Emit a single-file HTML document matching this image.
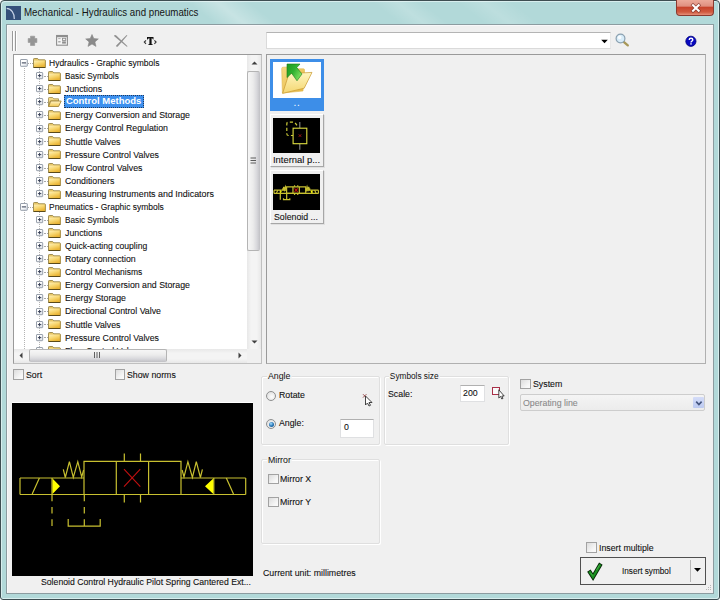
<!DOCTYPE html>
<html><head><meta charset="utf-8">
<style>
*{margin:0;padding:0;box-sizing:border-box}
html,body{width:720px;height:600px;overflow:hidden;background:#fff}
body{font-family:"Liberation Sans",sans-serif;font-size:8.8px;color:#101010;position:relative}
.a{position:absolute}
.t{position:absolute;white-space:nowrap;line-height:13px;height:13px}
.s{font-size:9.6px;transform:scaleX(.915);transform-origin:0 50%;-webkit-text-stroke:0.1px currentColor}
#win{left:0;top:0;width:720px;height:600px;background:#b2d9d9;border:1px solid #3e4e52;border-radius:4px 4px 3px 3px;box-shadow:inset 1px 1px 0 #d8eeee,inset -1px -1px 0 #d8eeee}
#content{left:6px;top:24px;width:708px;height:570px;background:#f0f0f0;border:1px solid #8c9ca0;box-shadow:inset 1px 1px 0 #f8f8fa}
.cb{position:absolute;width:10.5px;height:10.5px;border:1px solid #a2a2a2;background:linear-gradient(135deg,#dcdcdc,#f6f6f6 70%,#fbfbfb)}
.grp{position:absolute;border:1px solid #dfdfdf;border-radius:2px;box-shadow:inset 1px 1px 0 #fff,1px 1px 0 #fff}
.gt{position:absolute;background:#f0f0f0;padding:0 1px;white-space:nowrap;line-height:11px;height:11px;font-size:9.6px;transform:scaleX(.915);transform-origin:0 50%}
.eb{position:absolute;width:9px;height:9px;border:1px solid #a8b0bc;border-radius:1px;background:linear-gradient(135deg,#ffffff 40%,#dde2ea)}
.eb .h{position:absolute;left:1px;top:3px;width:5px;height:1px;background:#2a3450}
.eb .v{position:absolute;left:3px;top:1px;width:1px;height:5px;background:#2a3450}
.hd{position:absolute;height:1px;border-top:1px dotted #a8a8a8}
.vd{position:absolute;width:1px;border-left:1px dotted #b4b4b4}
.sel{background:#3d90ee;color:#fff;font-weight:bold;font-size:9.5px;padding:0 1.3px;height:13px;line-height:10px;border:1px dotted #203a60}
.rad{position:absolute;width:10px;height:10px;border-radius:50%;border:1px solid #8e8f8f;background:radial-gradient(circle at 60% 60%,#fdfdfd,#d9d9d9)}
.tb{position:absolute;background:#fff;border:1px solid #dfe0e2;border-top-color:#b0b0b0}
.card{position:absolute;width:54px;height:53px;border:1px solid #fff;border-right-color:#a6a6a6;border-bottom-color:#a6a6a6;box-shadow:1px 1px 0 #e0e0e0}
</style></head><body>
<svg width="0" height="0" style="position:absolute">
<defs>
<linearGradient id="fg" x1="0" y1="0" x2="0.5" y2="1"><stop offset="0" stop-color="#fdf0b8"/><stop offset="0.5" stop-color="#f8d873"/><stop offset="1" stop-color="#eab536"/></linearGradient>
<linearGradient id="fg2" x1="0" y1="0" x2="0" y2="1"><stop offset="0" stop-color="#fff4c8"/><stop offset="1" stop-color="#f2c850"/></linearGradient>
<g id="plus"><rect x="0.5" y="0.5" width="6.2" height="6.2" rx="0.5" fill="url(#ebg)" stroke="#98a0ac" stroke-width="1"/><path d="M1.9 3.6 H5.3 M3.6 1.9 V5.3" stroke="#3a4258" stroke-width="1"/></g>
<g id="minus"><rect x="0.5" y="0.5" width="6.8" height="6.8" rx="0.5" fill="url(#ebg)" stroke="#98a0ac" stroke-width="1"/><path d="M1.8 3.9 H6" stroke="#30384e" stroke-width="1"/></g>
<linearGradient id="ebg" x1="0" y1="0" x2="1" y2="1"><stop offset="0.4" stop-color="#ffffff"/><stop offset="1" stop-color="#d8dde6"/></linearGradient>
<g id="fclosed">
<path d="M0.5 9.5 V1.3 Q0.5 0.5 1.3 0.5 H4.6 L5.8 1.8 H11.7 Q12.3 1.8 12.3 2.5 V9.5 Z" fill="#e8c768" stroke="#8c7a3c" stroke-width="0.8"/>
<rect x="1" y="2.6" width="11" height="6.6" fill="url(#fg)"/>
<path d="M0.6 9.5 H12.3" stroke="#5a4a1a" stroke-width="1" fill="none"/><path d="M12.3 9.2 V2.6" stroke="#b09040" stroke-width="0.8" fill="none"/>
</g>
<g id="fopen">
<path d="M0.5 9.5 V1.3 Q0.5 0.5 1.3 0.5 H4.6 L5.8 1.8 H10.5 V4 H2.2 Z" fill="#f3d985" stroke="#9c8a4c" stroke-width="0.8"/>
<path d="M0.6 9.5 L2.8 4 H13.2 L10.6 9.5 Z" fill="url(#fg2)" stroke="#9c7c2c" stroke-width="0.8"/>
</g>
<g id="sym">
<g stroke="#c8c030" stroke-width="1.2" fill="none" vector-effect="non-scaling-stroke">
<path vector-effect="non-scaling-stroke" d="M20 478 H84 M20 494.5 H245.7 M20 478 V494.5 M245.7 478 V494.5 M181 478 H245.7"/>
<rect vector-effect="non-scaling-stroke" x="84" y="461.3" width="97" height="33.2"/>
<line vector-effect="non-scaling-stroke" x1="116.3" y1="461.3" x2="116.3" y2="494.5"/><line vector-effect="non-scaling-stroke" x1="148.6" y1="461.3" x2="148.6" y2="494.5"/>
<path vector-effect="non-scaling-stroke" d="M124.3 453.5 V461.3 M140.5 453.5 V461.3 M124.3 494.5 V502.6 M140.5 494.5 V502.6"/>
<path vector-effect="non-scaling-stroke" d="M32.2 494 L39.4 478 M226.3 478 L233.5 494"/>
<path vector-effect="non-scaling-stroke" d="M52 478 V494.5 M213.8 478 V494.5"/>
<path vector-effect="non-scaling-stroke" d="M63.3 469.4 L65.3 477.5 L69.4 461.7 L73.3 477.5 L77.8 461.7 L81.7 477 L83.6 470"/>
<path vector-effect="non-scaling-stroke" d="M202.4 469.4 L200.4 477.5 L196.3 461.7 L192.4 477.5 L187.9 461.7 L184 477 L182.1 470"/>
<path vector-effect="non-scaling-stroke" d="M52 494.5 V527" stroke-dasharray="6.7 5.7"/>
<path vector-effect="non-scaling-stroke" d="M84.3 494.5 V527" stroke-dasharray="6.7 5.7"/>
<path vector-effect="non-scaling-stroke" d="M68.2 519 V526.2 H100.2 V519"/>
</g>
<path vector-effect="non-scaling-stroke" d="M124 469.2 L140.3 486.7 M140.3 469.2 L124 486.7" stroke="#c01010" stroke-width="1.1"/>
<path d="M52.5 478.5 L60 486.2 L52.5 494 Z M213.3 478.5 L205 486.2 L213.3 494 Z" fill="#ffff00"/>
</g>
</defs>
</svg>
<div id="win" class="a"></div>
<div class="a" style="left:1px;top:1px;width:718px;height:23px;background:linear-gradient(38deg,rgba(255,255,255,0) 132px,rgba(255,255,255,.28) 150px,rgba(255,255,255,0) 170px,rgba(255,255,255,0) 246px,rgba(255,255,255,.16) 261px,rgba(255,255,255,0) 276px,rgba(255,255,255,0) 298px,rgba(255,255,255,.14) 314px,rgba(255,255,255,0) 332px);border-radius:3px 3px 0 0"></div>
<!-- title -->
<svg class="a" style="left:6px;top:6px" width="15" height="14" viewBox="0 0 15 14"><rect x="0" y="0" width="15" height="14" fill="#34507a"/><path d="M0.7 2.3 A8 10 0 0 1 8.3 13" stroke="#c8d4e8" stroke-width="1.2" fill="none"/></svg>
<div class="t" style="left:24px;top:6px;font-size:10.4px;transform:scaleX(.935);transform-origin:0 50%;color:#141414">Mechanical - Hydraulics and pneumatics</div>
<div class="a" style="left:676px;top:0;width:38px;height:16px;border:1px solid #8a3a30;border-top:none;border-radius:0 0 4px 4px;background:linear-gradient(#ecaa9a 0%,#e09080 40%,#c8442c 50%,#d05a40 80%,#e6907a 100%)"></div>
<svg class="a" style="left:690px;top:2px" width="12" height="12" viewBox="0 0 12 12"><path d="M3 3.2 L8.7 8.8 M8.7 3.2 L3 8.8" stroke="#7a3028" stroke-width="3.4" stroke-linecap="square" opacity="0.75"/><path d="M3 3.2 L8.7 8.8 M8.7 3.2 L3 8.8" stroke="#fff" stroke-width="2" stroke-linecap="square"/></svg>

<div id="content" class="a"></div>

<!-- toolbar -->
<div class="a" style="left:12px;top:31px;width:1px;height:20px;background:#9a9a9a;box-shadow:1px 0 0 #fff"></div>
<div class="a" style="left:15px;top:31px;width:1px;height:20px;background:#9a9a9a;box-shadow:1px 0 0 #fff"></div>
<svg class="a" style="left:27px;top:35px" width="12" height="11" viewBox="0 0 12 11"><path d="M3.5 1.2 H7.7 V3.5 H9.9 V7.5 H7.7 V10.5 H3.5 V7.5 H1.2 V3.5 H3.5 Z" fill="#959595" stroke="#959595" stroke-width="0.6" stroke-linejoin="round"/></svg>
<svg class="a" style="left:55px;top:34px" width="14" height="13" viewBox="0 0 14 13"><rect x="1.6" y="1.5" width="10.8" height="9.7" fill="#f6f6f6" stroke="#8e8e8e" stroke-width="1.1"/><rect x="1.6" y="1.5" width="10.8" height="1.7" fill="#8e8e8e"/><rect x="3.2" y="4.2" width="2.4" height="0.9" fill="#a4a4a4"/><rect x="3.2" y="7" width="2.4" height="1.5" fill="#ababab"/><rect x="7.5" y="4.3" width="3.2" height="2.1" fill="none" stroke="#8e8e8e" stroke-width="0.9"/><rect x="7.1" y="7.4" width="3.8" height="2.2" fill="#8e8e8e"/></svg>
<svg class="a" style="left:85px;top:34px" width="14" height="13" viewBox="0 0 14 13"><path d="M7 0.5 L8.8 4.6 L13.3 4.9 L9.9 7.9 L11 12.4 L7 10 L3 12.4 L4.1 7.9 L0.7 4.9 L5.2 4.6 Z" fill="#8a8a8a" stroke="#8a8a8a" stroke-width="0.6" stroke-linejoin="round"/></svg>
<svg class="a" style="left:113px;top:34px" width="16" height="14" viewBox="-1 -1 16 14"><path d="M0 1 Q0.3 -0.5 2 0.3 L13.6 11.2 L12.8 11.8 Z" fill="#909090"/><path d="M12.6 -0.1 L13.4 0.5 L3.8 11.6 Q2.2 12.4 2 10.8 Z" fill="#909090"/></svg>
<svg class="a" style="left:143px;top:36px" width="15" height="10" viewBox="0 0 15 10"><path d="M3 4.3 L1.3 6 L3 7.8 M11.4 4.3 L13.1 6 L11.4 7.8" stroke="#333" stroke-width="1.1" fill="none"/><path d="M4 1.1 H10.5 V3.4 L10 3.4 Q9.6 2.2 8.6 2.2 V8.1 Q8.8 8.4 9.8 8.4 V8.9 H5.2 V8.4 Q6.2 8.4 6.4 8.1 V2.2 Q5.4 2.2 4.6 3.4 L4 3.4 Z" fill="#111"/></svg>

<!-- search combo -->
<div class="tb" style="left:266px;top:32px;width:345px;height:17px;border-color:#dadada;border-top-color:#b4b4b4;border-right-color:#e8e8e8"></div>
<svg class="a" style="left:601px;top:39px" width="8" height="5" viewBox="0 0 8 5"><path d="M0.2 0.7 H6.8 L3.5 4.3 Z" fill="#000"/></svg>
<svg class="a" style="left:615px;top:33px" width="15" height="15" viewBox="0 0 15 15"><line x1="8.4" y1="8.6" x2="12.8" y2="12.4" stroke="#a89858" stroke-width="2.3" stroke-linecap="round"/><circle cx="5.5" cy="5.5" r="4.4" fill="#d8ecf8" stroke="#8aa0b0" stroke-width="1.2"/><circle cx="4.6" cy="4.4" r="1.8" fill="#fff" opacity="0.8"/></svg>
<svg class="a" style="left:684px;top:34px" width="14" height="14" viewBox="684 34 14 14"><circle cx="690.9" cy="41.3" r="5.1" fill="#0808c0" stroke="#000078" stroke-width="0.8"/><path d="M689.2 39.9 Q689.2 38.3 691 38.3 Q692.8 38.3 692.8 39.8 Q692.8 40.7 691.6 41.3 Q691 41.6 691 42.5" stroke="#fff" stroke-width="1.4" fill="none"/><rect x="690.3" y="43.2" width="1.4" height="1.4" fill="#fff"/></svg>

<!-- tree panel -->
<div class="a" style="left:13px;top:54px;width:249px;height:310px;background:#fff;border:1px solid #9a9a9a;border-right-color:#c0c0c0;border-bottom-color:#c0c0c0"></div>
<div class="a" style="left:14px;top:55px;width:233px;height:294px;overflow:hidden">
<div class="a" style="left:-14px;top:-55px;width:260px;height:400px">
<div class="vd" style="left:24px;top:67.5px;height:281.5px"></div>
<div class="vd" style="left:39px;top:68.0px;height:125.7px"></div>
<div class="vd" style="left:39px;top:211.8px;height:137.2px"></div>
<svg class="a" style="left:20px;top:59px" width="8" height="8" viewBox="0 0 8 8"><use href="#minus"/></svg>
<div class="hd" style="left:28.2px;top:63.00px;width:4.5px"></div>
<svg class="a" style="left:32.6px;top:58.00px" width="14" height="10" viewBox="0 0 14 10"><use href="#fclosed"/></svg>
<div class="t s" style="left:49.4px;top:56.10px;transform:scaleX(0.8854)">Hydraulics - Graphic symbols</div>
<svg class="a" style="left:36px;top:72px" width="8" height="8" viewBox="0 0 8 8"><use href="#plus"/></svg>
<div class="hd" style="left:44.0px;top:76.07px;width:4.1px"></div>
<svg class="a" style="left:48.0px;top:71.07px" width="14" height="10" viewBox="0 0 14 10"><use href="#fclosed"/></svg>
<div class="t s" style="left:64.8px;top:69.17px;transform:scaleX(0.8546)">Basic Symbols</div>
<svg class="a" style="left:36px;top:85px" width="8" height="8" viewBox="0 0 8 8"><use href="#plus"/></svg>
<div class="hd" style="left:44.0px;top:89.14px;width:4.1px"></div>
<svg class="a" style="left:48.0px;top:84.14px" width="14" height="10" viewBox="0 0 14 10"><use href="#fclosed"/></svg>
<div class="t s" style="left:64.8px;top:82.24px">Junctions</div>
<svg class="a" style="left:36px;top:98px" width="8" height="8" viewBox="0 0 8 8"><use href="#plus"/></svg>
<div class="hd" style="left:44.0px;top:102.21px;width:4.1px"></div>
<svg class="a" style="left:48.0px;top:97.21px" width="14" height="10" viewBox="0 0 14 10"><use href="#fopen"/></svg>
<div class="t sel" style="left:63.6px;top:95.11px">Control Methods</div>
<svg class="a" style="left:36px;top:111px" width="8" height="8" viewBox="0 0 8 8"><use href="#plus"/></svg>
<div class="hd" style="left:44.0px;top:115.28px;width:4.1px"></div>
<svg class="a" style="left:48.0px;top:110.28px" width="14" height="10" viewBox="0 0 14 10"><use href="#fclosed"/></svg>
<div class="t s" style="left:64.8px;top:108.38px">Energy Conversion and Storage</div>
<svg class="a" style="left:36px;top:125px" width="8" height="8" viewBox="0 0 8 8"><use href="#plus"/></svg>
<div class="hd" style="left:44.0px;top:128.35px;width:4.1px"></div>
<svg class="a" style="left:48.0px;top:123.35px" width="14" height="10" viewBox="0 0 14 10"><use href="#fclosed"/></svg>
<div class="t s" style="left:64.8px;top:121.45px">Energy Control Regulation</div>
<svg class="a" style="left:36px;top:138px" width="8" height="8" viewBox="0 0 8 8"><use href="#plus"/></svg>
<div class="hd" style="left:44.0px;top:141.42px;width:4.1px"></div>
<svg class="a" style="left:48.0px;top:136.42px" width="14" height="10" viewBox="0 0 14 10"><use href="#fclosed"/></svg>
<div class="t s" style="left:64.8px;top:134.52px">Shuttle Valves</div>
<svg class="a" style="left:36px;top:151px" width="8" height="8" viewBox="0 0 8 8"><use href="#plus"/></svg>
<div class="hd" style="left:44.0px;top:154.49px;width:4.1px"></div>
<svg class="a" style="left:48.0px;top:149.49px" width="14" height="10" viewBox="0 0 14 10"><use href="#fclosed"/></svg>
<div class="t s" style="left:64.8px;top:147.59px">Pressure Control Valves</div>
<svg class="a" style="left:36px;top:164px" width="8" height="8" viewBox="0 0 8 8"><use href="#plus"/></svg>
<div class="hd" style="left:44.0px;top:167.56px;width:4.1px"></div>
<svg class="a" style="left:48.0px;top:162.56px" width="14" height="10" viewBox="0 0 14 10"><use href="#fclosed"/></svg>
<div class="t s" style="left:64.8px;top:160.66px">Flow Control Valves</div>
<svg class="a" style="left:36px;top:177px" width="8" height="8" viewBox="0 0 8 8"><use href="#plus"/></svg>
<div class="hd" style="left:44.0px;top:180.63px;width:4.1px"></div>
<svg class="a" style="left:48.0px;top:175.63px" width="14" height="10" viewBox="0 0 14 10"><use href="#fclosed"/></svg>
<div class="t s" style="left:64.8px;top:173.73px">Conditioners</div>
<svg class="a" style="left:36px;top:190px" width="8" height="8" viewBox="0 0 8 8"><use href="#plus"/></svg>
<div class="hd" style="left:44.0px;top:193.70px;width:4.1px"></div>
<svg class="a" style="left:48.0px;top:188.70px" width="14" height="10" viewBox="0 0 14 10"><use href="#fclosed"/></svg>
<div class="t s" style="left:64.8px;top:186.80px;transform:scaleX(0.9281)">Measuring Instruments and Indicators</div>
<svg class="a" style="left:20px;top:203px" width="8" height="8" viewBox="0 0 8 8"><use href="#minus"/></svg>
<div class="hd" style="left:28.2px;top:206.77px;width:4.5px"></div>
<svg class="a" style="left:32.6px;top:201.77px" width="14" height="10" viewBox="0 0 14 10"><use href="#fclosed"/></svg>
<div class="t s" style="left:49.4px;top:199.87px;transform:scaleX(0.8827)">Pneumatics - Graphic symbols</div>
<svg class="a" style="left:36px;top:216px" width="8" height="8" viewBox="0 0 8 8"><use href="#plus"/></svg>
<div class="hd" style="left:44.0px;top:219.84px;width:4.1px"></div>
<svg class="a" style="left:48.0px;top:214.84px" width="14" height="10" viewBox="0 0 14 10"><use href="#fclosed"/></svg>
<div class="t s" style="left:64.8px;top:212.94px;transform:scaleX(0.8546)">Basic Symbols</div>
<svg class="a" style="left:36px;top:229px" width="8" height="8" viewBox="0 0 8 8"><use href="#plus"/></svg>
<div class="hd" style="left:44.0px;top:232.91px;width:4.1px"></div>
<svg class="a" style="left:48.0px;top:227.91px" width="14" height="10" viewBox="0 0 14 10"><use href="#fclosed"/></svg>
<div class="t s" style="left:64.8px;top:226.01px">Junctions</div>
<svg class="a" style="left:36px;top:242px" width="8" height="8" viewBox="0 0 8 8"><use href="#plus"/></svg>
<div class="hd" style="left:44.0px;top:245.98px;width:4.1px"></div>
<svg class="a" style="left:48.0px;top:240.98px" width="14" height="10" viewBox="0 0 14 10"><use href="#fclosed"/></svg>
<div class="t s" style="left:64.8px;top:239.08px;transform:scaleX(0.8965)">Quick-acting coupling</div>
<svg class="a" style="left:36px;top:255px" width="8" height="8" viewBox="0 0 8 8"><use href="#plus"/></svg>
<div class="hd" style="left:44.0px;top:259.05px;width:4.1px"></div>
<svg class="a" style="left:48.0px;top:254.05px" width="14" height="10" viewBox="0 0 14 10"><use href="#fclosed"/></svg>
<div class="t s" style="left:64.8px;top:252.15px">Rotary connection</div>
<svg class="a" style="left:36px;top:268px" width="8" height="8" viewBox="0 0 8 8"><use href="#plus"/></svg>
<div class="hd" style="left:44.0px;top:272.12px;width:4.1px"></div>
<svg class="a" style="left:48.0px;top:267.12px" width="14" height="10" viewBox="0 0 14 10"><use href="#fclosed"/></svg>
<div class="t s" style="left:64.8px;top:265.22px;transform:scaleX(0.8830)">Control Mechanisms</div>
<svg class="a" style="left:36px;top:281px" width="8" height="8" viewBox="0 0 8 8"><use href="#plus"/></svg>
<div class="hd" style="left:44.0px;top:285.19px;width:4.1px"></div>
<svg class="a" style="left:48.0px;top:280.19px" width="14" height="10" viewBox="0 0 14 10"><use href="#fclosed"/></svg>
<div class="t s" style="left:64.8px;top:278.29px">Energy Conversion and Storage</div>
<svg class="a" style="left:36px;top:294px" width="8" height="8" viewBox="0 0 8 8"><use href="#plus"/></svg>
<div class="hd" style="left:44.0px;top:298.26px;width:4.1px"></div>
<svg class="a" style="left:48.0px;top:293.26px" width="14" height="10" viewBox="0 0 14 10"><use href="#fclosed"/></svg>
<div class="t s" style="left:64.8px;top:291.36px">Energy Storage</div>
<svg class="a" style="left:36px;top:308px" width="8" height="8" viewBox="0 0 8 8"><use href="#plus"/></svg>
<div class="hd" style="left:44.0px;top:311.33px;width:4.1px"></div>
<svg class="a" style="left:48.0px;top:306.33px" width="14" height="10" viewBox="0 0 14 10"><use href="#fclosed"/></svg>
<div class="t s" style="left:64.8px;top:304.43px">Directional Control Valve</div>
<svg class="a" style="left:36px;top:321px" width="8" height="8" viewBox="0 0 8 8"><use href="#plus"/></svg>
<div class="hd" style="left:44.0px;top:324.40px;width:4.1px"></div>
<svg class="a" style="left:48.0px;top:319.40px" width="14" height="10" viewBox="0 0 14 10"><use href="#fclosed"/></svg>
<div class="t s" style="left:64.8px;top:317.50px">Shuttle Valves</div>
<svg class="a" style="left:36px;top:334px" width="8" height="8" viewBox="0 0 8 8"><use href="#plus"/></svg>
<div class="hd" style="left:44.0px;top:337.47px;width:4.1px"></div>
<svg class="a" style="left:48.0px;top:332.47px" width="14" height="10" viewBox="0 0 14 10"><use href="#fclosed"/></svg>
<div class="t s" style="left:64.8px;top:330.57px">Pressure Control Valves</div>
<svg class="a" style="left:36px;top:347px" width="8" height="8" viewBox="0 0 8 8"><use href="#plus"/></svg>
<div class="hd" style="left:44.0px;top:350.54px;width:4.1px"></div>
<svg class="a" style="left:48.0px;top:345.54px" width="14" height="10" viewBox="0 0 14 10"><use href="#fclosed"/></svg>
<div class="t s" style="left:64.8px;top:343.64px">Flow Control Valves</div>
</div>
</div>
<!-- vertical scrollbar -->
<div class="a" style="left:247px;top:55px;width:14px;height:294px;background:linear-gradient(90deg,#e8e8e8,#f4f4f4 30%,#f4f4f4 70%,#e8e8e8)"></div>
<svg class="a" style="left:251px;top:61px" width="7" height="4" viewBox="0 0 7 4"><path d="M0.5 3.5 L3.5 0.5 L6.5 3.5 Z" fill="#404040"/></svg>
<div class="a" style="left:247px;top:71px;width:13px;height:180px;border:1px solid #b4b4b4;border-right-color:#c4c4c8;border-radius:2px;background:linear-gradient(90deg,#f6f6f6,#ececec 45%,#d8d8dc 80%,#c8c8cc)"></div>
<svg class="a" style="left:250px;top:157px" width="7" height="7" viewBox="0 0 7 7"><path d="M0.5 1 H6 M0.5 3.5 H6 M0.5 6 H6" stroke="#5a5a5a" stroke-width="1"/></svg>
<svg class="a" style="left:251px;top:340px" width="7" height="4" viewBox="0 0 7 4"><path d="M0.5 0.5 L3.5 3.5 L6.5 0.5 Z" fill="#404040"/></svg>
<!-- horizontal scrollbar -->
<div class="a" style="left:14px;top:349px;width:247px;height:14px;background:linear-gradient(#e8e8e8,#f4f4f4 30%,#f4f4f4 70%,#e8e8e8)"></div>
<svg class="a" style="left:19px;top:352px" width="4" height="7" viewBox="0 0 4 7"><path d="M3.5 0.5 L0.5 3.5 L3.5 6.5 Z" fill="#404040"/></svg>
<div class="a" style="left:29px;top:349px;width:138px;height:13px;border:1px solid #b4b4b4;border-bottom-color:#c4c4c8;border-radius:2px;background:linear-gradient(#f6f6f6,#ececec 45%,#d8d8dc 80%,#c8c8cc)"></div>
<svg class="a" style="left:94px;top:352px" width="7" height="6" viewBox="0 0 7 6"><path d="M0.5 0 V6 M3 0 V6 M5.5 0 V6" stroke="#606060" stroke-width="1"/></svg>
<svg class="a" style="left:238px;top:352px" width="4" height="7" viewBox="0 0 4 7"><path d="M0.5 0.5 L3.5 3.5 L0.5 6.5 Z" fill="#404040"/></svg>
<div class="a" style="left:247px;top:349px;width:14px;height:14px;background:#f0f0f0"></div>

<!-- right panel -->
<div class="a" style="left:266px;top:54px;width:440px;height:310px;background:#f0f0f0;border:1px solid #9a9a9a;border-right-color:#b0b0b0;border-bottom-color:#b0b0b0"></div>
<!-- thumb 1 selected -->
<div class="a" style="left:270px;top:59px;width:54px;height:52px;background:#3d8ee8"></div>
<div class="a" style="left:273px;top:62px;width:48px;height:36px;background:#fff"></div>
<div class="t" style="left:270px;top:96.3px;width:54px;text-align:center;color:#fff;font-size:10px;letter-spacing:0.6px">..</div>
<svg class="a" style="left:280px;top:63px" width="33" height="31" viewBox="0 0 33 31">
<defs><linearGradient id="fb" x1="0" y1="0" x2="1" y2="1"><stop offset="0" stop-color="#f6d880"/><stop offset="1" stop-color="#e6b840"/></linearGradient>
<linearGradient id="ff" x1="0" y1="0" x2="0" y2="1"><stop offset="0" stop-color="#fff6c0"/><stop offset="1" stop-color="#f4d670"/></linearGradient>
<linearGradient id="ga" x1="0" y1="0" x2="1" y2="0.6"><stop offset="0" stop-color="#1e9a1e"/><stop offset="0.5" stop-color="#30b030"/><stop offset="1" stop-color="#80e060"/></linearGradient></defs>
<path d="M2.4 30 L1.7 5.5 Q1.7 4.2 3.2 4.2 L9 4 L11 5.8 L23.5 5.8 Q24.5 5.8 24.5 7 L24.5 10 L23 28 Z" fill="url(#fb)" stroke="#e0b850" stroke-width="0.6"/>
<path d="M2.6 30.4 L9 10.6 L32 9.4 L24.2 25.2 Z" fill="url(#ff)" stroke="#c89a30" stroke-width="0.7"/>
<path d="M7 1 L20 1 L16.8 4.6 L22 11 L17 17.8 L11.6 10.2 L7 14.6 Z" fill="url(#ga)" stroke="#1a7a1a" stroke-width="0.6" stroke-linejoin="round"/>
</svg>
<!-- thumb 2 -->
<div class="card" style="left:270px;top:114px"></div>
<div class="a" style="left:273px;top:118px;width:47px;height:35px;background:#000"></div>
<svg class="a" style="left:273px;top:118px" width="47" height="35" viewBox="0 0 47 35">
<path d="M26.8 4 V10 M26.8 25.7 V31.8" stroke="#8c8c8c" stroke-width="1.1"/>
<path d="M20.1 17.5 H15.6 Q13.8 17.5 13.8 15.7 V5.9 Q13.8 4.1 15.6 4.1 H19.5 Q22.6 4.1 24.6 8.8" stroke="#c8c838" stroke-width="1.2" fill="none" stroke-dasharray="3.2 2.2" stroke-dashoffset="1"/>
<rect x="20.1" y="10.2" width="13.7" height="15.5" fill="#000" stroke="#dede40" stroke-width="1.1"/>
<path d="M25.8 16.4 L28.2 18.8 M28.2 16.4 L25.8 18.8" stroke="#b01818" stroke-width="0.9"/>
</svg>
<div class="t s" style="left:272.5px;top:152.6px;transform:scaleX(.98)">Internal p...</div>
<!-- thumb 3 -->
<div class="card" style="left:270px;top:170px;height:54px"></div>
<div class="a" style="left:273px;top:174px;width:47px;height:36px;background:#000"></div>
<svg class="a" style="left:273px;top:174px" width="47" height="36" viewBox="0 0 47 36"><g transform="translate(1,11.3) scale(0.197) translate(-20,-453.5)" class="thumbsym"><use href="#sym"/></g></svg>
<div class="t s" style="left:274px;top:209.6px">Solenoid ...</div>

<!-- checkboxes below tree -->
<div class="cb" style="left:13px;top:369px"></div>
<div class="t s" style="left:25.5px;top:367.5px">Sort</div>
<div class="cb" style="left:114.5px;top:369px"></div>
<div class="t s" style="left:126.6px;top:367.5px">Show norms</div>

<!-- preview -->
<div class="a" style="left:12px;top:402px;width:241px;height:1px;background:#fff"></div>
<div class="a" style="left:12px;top:403px;width:241px;height:173px;background:#000"></div>
<svg class="a" style="left:12px;top:403px" width="241" height="173" viewBox="12 403 241 173"><use href="#sym"/></svg>
<div class="t s" style="left:41.3px;top:574.8px;transform:scaleX(.905)">Solenoid Control Hydraulic Pilot Spring Cantered Ext...</div>

<!-- Angle group -->
<div class="grp" style="left:261px;top:376px;width:119px;height:69px"></div>
<div class="gt" style="left:266.8px;top:370px">Angle</div>
<div class="rad" style="left:266.2px;top:391px"></div>
<div class="t s" style="left:278.5px;top:387.7px">Rotate</div>
<div class="rad" style="left:266.2px;top:419px"><div class="a" style="left:2px;top:2px;width:5px;height:5px;border-radius:50%;background:radial-gradient(circle at 40% 35%,#a8e0ff,#2a78b8 50%,#104878)"></div></div>
<div class="t s" style="left:279px;top:415.5px">Angle:</div>
<div class="tb" style="left:340px;top:419px;width:34px;height:18.5px"></div>
<div class="t s" style="left:343.5px;top:419.6px">0</div>
<svg class="a" style="left:361px;top:393px" width="13" height="14" viewBox="0 0 13 14"><path d="M2 1.2 L5.4 4.6 M5.4 1.2 L2 4.6" stroke="#904040" stroke-width="0.9"/><path d="M4.5 3 V12 L6.5 10 L8 13 L9.5 12.3 L8 9.5 L11 9.5 Z" fill="#fff" stroke="#303030" stroke-width="0.9" stroke-linejoin="round"/></svg>

<!-- Symbols size group -->
<div class="grp" style="left:384px;top:376px;width:125px;height:69px"></div>
<div class="gt" style="left:389px;top:370px;transform:scaleX(.862)">Symbols size</div>
<div class="t s" style="left:388px;top:386.7px">Scale:</div>
<div class="tb" style="left:460px;top:385px;width:25px;height:16.5px"></div>
<div class="t s" style="left:463px;top:386.4px">200</div>
<svg class="a" style="left:490px;top:386px" width="16" height="14" viewBox="490 386 16 14"><rect x="492.5" y="387.5" width="7" height="7" fill="#fafafa" stroke="#a83048" stroke-width="1"/><path d="M498.8 389.8 V398 L500.6 396.4 L501.8 399 L503 398.4 L501.8 396 L504.2 396 Z" fill="#fff" stroke="#202020" stroke-width="0.8" stroke-linejoin="round"/></svg>

<!-- Mirror group -->
<div class="grp" style="left:261px;top:459px;width:119px;height:85px"></div>
<div class="gt" style="left:266.5px;top:453.5px">Mirror</div>
<div class="cb" style="left:268px;top:473.5px"></div>
<div class="t s" style="left:280px;top:472px">Mirror X</div>
<div class="cb" style="left:268px;top:496.5px"></div>
<div class="t s" style="left:280px;top:495px">Mirror Y</div>

<!-- System -->
<div class="cb" style="left:520px;top:378.5px"></div>
<div class="t s" style="left:533px;top:376.6px">System</div>
<div class="a" style="left:520px;top:394px;width:185px;height:17px;border:1px solid #cdcdcd;border-radius:2px;background:linear-gradient(#f4f4f4,#ececec)"></div>
<div class="t s" style="left:523px;top:395.6px;color:#8a8a8a">Operating line</div>
<div class="a" style="left:693px;top:397px;width:11px;height:10.8px;background:linear-gradient(#d4dcf8,#bccaf0);border-radius:1px"></div>
<svg class="a" style="left:694.5px;top:400px" width="8" height="7" viewBox="0 0 8 7"><path d="M1.2 1.6 L3.9 4.6 L6.6 1.6" stroke="#44557e" stroke-width="1.6" fill="none"/></svg>

<div class="t s" style="left:262.5px;top:565.6px">Current unit: millimetres</div>

<!-- insert -->
<div class="cb" style="left:586px;top:542px"></div>
<div class="t s" style="left:599px;top:541px">Insert multiple</div>
<div class="a" style="left:579.5px;top:556.5px;width:126.5px;height:28px;border:1.8px solid #505050;background:#f0f0f0"></div>
<div class="a" style="left:690px;top:560px;width:1px;height:22px;background:#b8b8b8"></div>
<svg class="a" style="left:694px;top:568px" width="7" height="4" viewBox="0 0 7 4"><path d="M0 0 H7 L3.5 3.8 Z" fill="#000"/></svg>
<svg class="a" style="left:584px;top:560px" width="22" height="22" viewBox="584 560 22 22"><path d="M590 572.4 L593 577 L599.8 565.4" stroke="#082808" stroke-width="4.1" fill="none" stroke-linejoin="miter" stroke-linecap="square"/><path d="M590 572.4 L593 577 L599.8 565.4" stroke="#1a9020" stroke-width="2.3" fill="none" stroke-linejoin="miter" stroke-linecap="square"/><path d="M590.6 572.8 L592.8 575.6 M596.5 569.8 L599.3 565.4" stroke="#50b850" stroke-width="0.8" fill="none"/></svg>
<div class="t s" style="left:621.7px;top:563.5px;transform:scaleX(.854)">Insert symbol</div>
<svg class="a" style="left:704px;top:584px" width="8" height="8" viewBox="0 0 8 8"><g fill="#b8b8b8"><rect x="6" y="1" width="1" height="1"/><rect x="4" y="3" width="1" height="1"/><rect x="6" y="3" width="1" height="1"/><rect x="2" y="5" width="1" height="1"/><rect x="4" y="5" width="1" height="1"/><rect x="6" y="5" width="1" height="1"/></g></svg>

</body></html>
